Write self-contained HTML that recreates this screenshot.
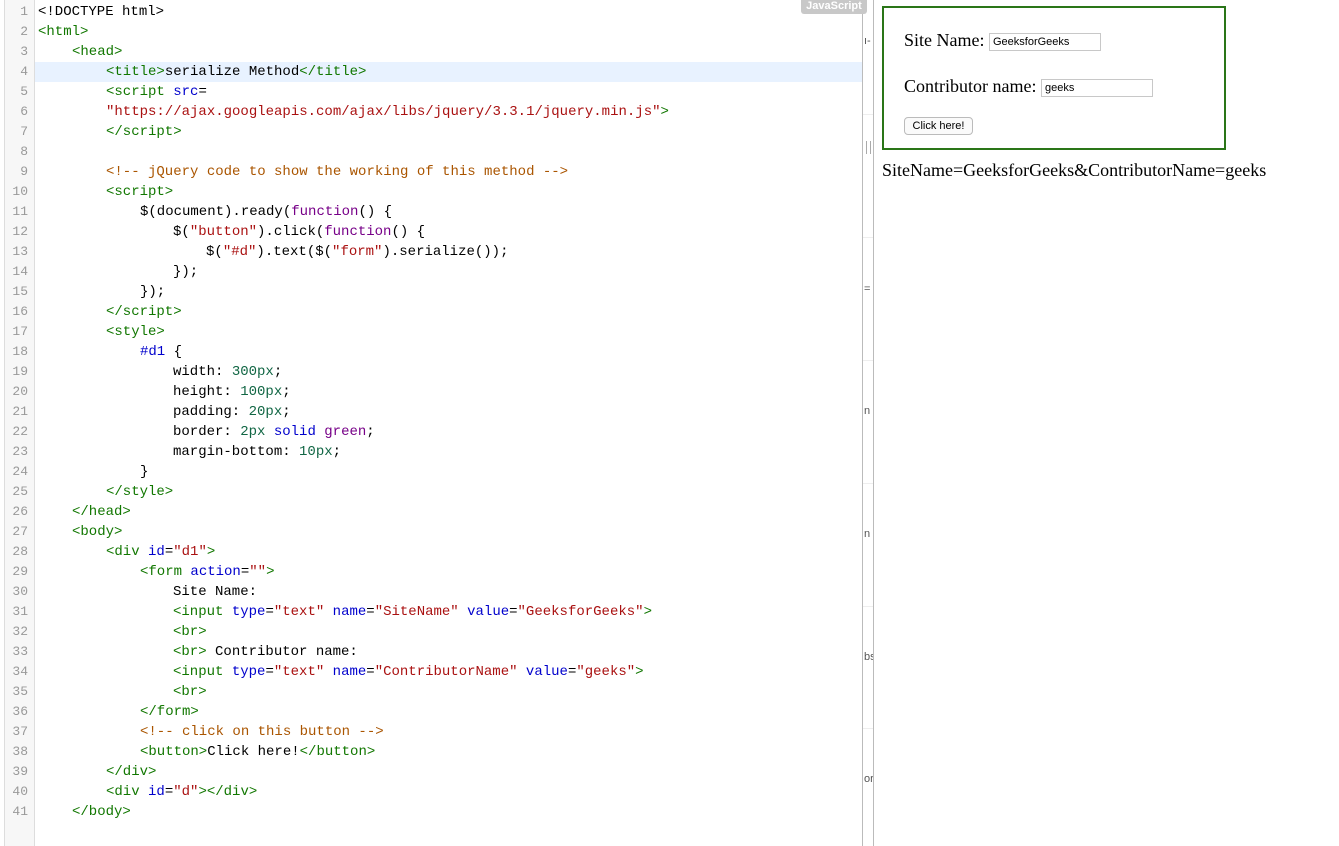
<!DOCTYPE html>
<html><head><style>
body{margin:0;width:1339px;height:846px;overflow:hidden;background:#fff;position:relative;font-family:"Liberation Sans",sans-serif}
#ed{position:absolute;left:4px;top:0;width:858px;height:846px;border-left:1px solid #ddd}
#gut{position:absolute;left:0;top:0;width:29px;height:846px;background:#f7f7f7;border-right:1px solid #ddd}
.ln{position:absolute;left:0;width:24px;text-align:right;color:#999;font:13px "Liberation Mono",monospace}
.cl{position:absolute;left:34px;white-space:pre;font:14px "Liberation Mono",monospace;color:#000;line-height:20px;height:20px}
.t{color:#170}.a{color:#00c}.s{color:#a11}.c{color:#a50}.k{color:#708}.n{color:#164}
#strip{position:absolute;left:862px;top:0;width:10px;height:846px;border-left:1px solid #bbb;border-right:1px solid #bbb;overflow:hidden}
.sf{position:absolute;left:1px;font-size:11px;color:#555}
.sh{position:absolute;left:0;width:10px;border-top:1px solid #eee}
#js{position:absolute;left:801px;top:0;width:66px;height:14px;background:#c8c8c8;color:#fff;font:bold 11px "Liberation Sans",sans-serif;text-align:center;line-height:13px;border-radius:0 0 3px 3px}
#d1{position:absolute;left:882px;top:6px;width:300px;height:100px;padding:20px;border:2px solid #2a7518;font:18px "Liberation Serif",serif}
.in{display:inline-block;border:1px solid #c8c8c8;height:16px;font:11px "Liberation Sans",sans-serif;line-height:16px;padding-left:3px;vertical-align:1px;box-sizing:border-box}
#btn{position:absolute;left:20px;top:109px;width:69px;height:18px;border:1px solid #bbb;border-radius:4px;font:11px "Liberation Sans",sans-serif;text-align:center;line-height:16px;box-sizing:border-box;background:#fafafa}
#d{position:absolute;left:882px;top:160px;font:18px "Liberation Serif",serif}
</style></head><body>
<div id="ed"><div id="gut"></div>
<div style="position:absolute;left:30px;top:62px;width:828px;height:20px;background:#e8f2ff"></div>
</div>
<div id="lines"></div>
<div class="cl" style="top:2px;left:38px">&lt;!DOCTYPE html&gt;</div>
<div class="cl" style="top:22px;left:38px"><span class="t">&lt;html&gt;</span></div>
<div class="cl" style="top:42px;left:72px"><span class="t">&lt;head&gt;</span></div>
<div class="cl" style="top:62px;left:106px"><span class="t">&lt;title&gt;</span>serialize Method<span class="t">&lt;/title&gt;</span></div>
<div class="cl" style="top:82px;left:106px"><span class="t">&lt;script</span> <span class="a">src</span>=</div>
<div class="cl" style="top:102px;left:106px"><span class="s">"https://ajax.googleapis.com/ajax/libs/jquery/3.3.1/jquery.min.js"</span><span class="t">&gt;</span></div>
<div class="cl" style="top:122px;left:106px"><span class="t">&lt;/script&gt;</span></div>
<div class="cl" style="top:162px;left:106px"><span class="c">&lt;!-- jQuery code to show the working of this method --&gt;</span></div>
<div class="cl" style="top:182px;left:106px"><span class="t">&lt;script&gt;</span></div>
<div class="cl" style="top:202px;left:140px">$(document).ready(<span class="k">function</span>() {</div>
<div class="cl" style="top:222px;left:173px">$(<span class="s">"button"</span>).click(<span class="k">function</span>() {</div>
<div class="cl" style="top:242px;left:206px">$(<span class="s">"#d"</span>).text($(<span class="s">"form"</span>).serialize());</div>
<div class="cl" style="top:262px;left:173px">});</div>
<div class="cl" style="top:282px;left:140px">});</div>
<div class="cl" style="top:302px;left:106px"><span class="t">&lt;/script&gt;</span></div>
<div class="cl" style="top:322px;left:106px"><span class="t">&lt;style&gt;</span></div>
<div class="cl" style="top:342px;left:140px"><span class="a">#d1</span> {</div>
<div class="cl" style="top:362px;left:173px">width: <span class="n">300px</span>;</div>
<div class="cl" style="top:382px;left:173px">height: <span class="n">100px</span>;</div>
<div class="cl" style="top:402px;left:173px">padding: <span class="n">20px</span>;</div>
<div class="cl" style="top:422px;left:173px">border: <span class="n">2px</span> <span class="a">solid</span> <span class="k">green</span>;</div>
<div class="cl" style="top:442px;left:173px">margin-bottom: <span class="n">10px</span>;</div>
<div class="cl" style="top:462px;left:140px">}</div>
<div class="cl" style="top:482px;left:106px"><span class="t">&lt;/style&gt;</span></div>
<div class="cl" style="top:502px;left:72px"><span class="t">&lt;/head&gt;</span></div>
<div class="cl" style="top:522px;left:72px"><span class="t">&lt;body&gt;</span></div>
<div class="cl" style="top:542px;left:106px"><span class="t">&lt;div</span> <span class="a">id</span>=<span class="s">"d1"</span><span class="t">&gt;</span></div>
<div class="cl" style="top:562px;left:140px"><span class="t">&lt;form</span> <span class="a">action</span>=<span class="s">""</span><span class="t">&gt;</span></div>
<div class="cl" style="top:582px;left:173px">Site Name:</div>
<div class="cl" style="top:602px;left:173px"><span class="t">&lt;input</span> <span class="a">type</span>=<span class="s">"text"</span> <span class="a">name</span>=<span class="s">"SiteName"</span> <span class="a">value</span>=<span class="s">"GeeksforGeeks"</span><span class="t">&gt;</span></div>
<div class="cl" style="top:622px;left:173px"><span class="t">&lt;br&gt;</span></div>
<div class="cl" style="top:642px;left:173px"><span class="t">&lt;br&gt;</span> Contributor name:</div>
<div class="cl" style="top:662px;left:173px"><span class="t">&lt;input</span> <span class="a">type</span>=<span class="s">"text"</span> <span class="a">name</span>=<span class="s">"ContributorName"</span> <span class="a">value</span>=<span class="s">"geeks"</span><span class="t">&gt;</span></div>
<div class="cl" style="top:682px;left:173px"><span class="t">&lt;br&gt;</span></div>
<div class="cl" style="top:702px;left:140px"><span class="t">&lt;/form&gt;</span></div>
<div class="cl" style="top:722px;left:140px"><span class="c">&lt;!-- click on this button --&gt;</span></div>
<div class="cl" style="top:742px;left:140px"><span class="t">&lt;button&gt;</span>Click here!<span class="t">&lt;/button&gt;</span></div>
<div class="cl" style="top:762px;left:106px"><span class="t">&lt;/div&gt;</span></div>
<div class="cl" style="top:782px;left:106px"><span class="t">&lt;div</span> <span class="a">id</span>=<span class="s">"d"</span><span class="t">&gt;&lt;/div&gt;</span></div>
<div class="cl" style="top:802px;left:72px"><span class="t">&lt;/body&gt;</span></div>
<div id="nums" style="position:absolute;left:4px;top:0">
<div class="ln" style="top:4px">1</div><div class="ln" style="top:24px">2</div><div class="ln" style="top:44px">3</div><div class="ln" style="top:64px">4</div><div class="ln" style="top:84px">5</div><div class="ln" style="top:104px">6</div><div class="ln" style="top:124px">7</div><div class="ln" style="top:144px">8</div><div class="ln" style="top:164px">9</div><div class="ln" style="top:184px">10</div><div class="ln" style="top:204px">11</div><div class="ln" style="top:224px">12</div><div class="ln" style="top:244px">13</div><div class="ln" style="top:264px">14</div><div class="ln" style="top:284px">15</div><div class="ln" style="top:304px">16</div><div class="ln" style="top:324px">17</div><div class="ln" style="top:344px">18</div><div class="ln" style="top:364px">19</div><div class="ln" style="top:384px">20</div><div class="ln" style="top:404px">21</div><div class="ln" style="top:424px">22</div><div class="ln" style="top:444px">23</div><div class="ln" style="top:464px">24</div><div class="ln" style="top:484px">25</div><div class="ln" style="top:504px">26</div><div class="ln" style="top:524px">27</div><div class="ln" style="top:544px">28</div><div class="ln" style="top:564px">29</div><div class="ln" style="top:584px">30</div><div class="ln" style="top:604px">31</div><div class="ln" style="top:624px">32</div><div class="ln" style="top:644px">33</div><div class="ln" style="top:664px">34</div><div class="ln" style="top:684px">35</div><div class="ln" style="top:704px">36</div><div class="ln" style="top:724px">37</div><div class="ln" style="top:744px">38</div><div class="ln" style="top:764px">39</div><div class="ln" style="top:784px">40</div><div class="ln" style="top:804px">41</div>
</div>
<div id="strip">
<div class="sf" style="top:35px">ı-</div><div class="sh" style="top:114px"></div>
<div style="position:absolute;left:3px;top:141px;width:3px;height:13px;border-left:1px solid #aaa;border-right:1px solid #aaa"></div>
<div class="sh" style="top:237px"></div><div class="sf" style="top:283px">=</div>
<div class="sh" style="top:360px"></div><div class="sf" style="top:405px">n</div>
<div class="sh" style="top:483px"></div><div class="sf" style="top:528px">n</div>
<div class="sh" style="top:606px"></div><div class="sf" style="top:651px">bs</div>
<div class="sh" style="top:728px"></div><div class="sf" style="top:773px">or</div>
</div>
<div id="js">JavaScript</div>
<div id="d1">
<div style="position:absolute;left:20px;top:22px">Site Name: <span class="in" style="width:112px;height:18px">GeeksforGeeks</span></div>
<div style="position:absolute;left:20px;top:68px">Contributor name: <span class="in" style="width:112px;height:18px">geeks</span></div>
<div id="btn">Click here!</div>
</div>
<div id="d">SiteName=GeeksforGeeks&amp;ContributorName=geeks</div>
</body></html>
